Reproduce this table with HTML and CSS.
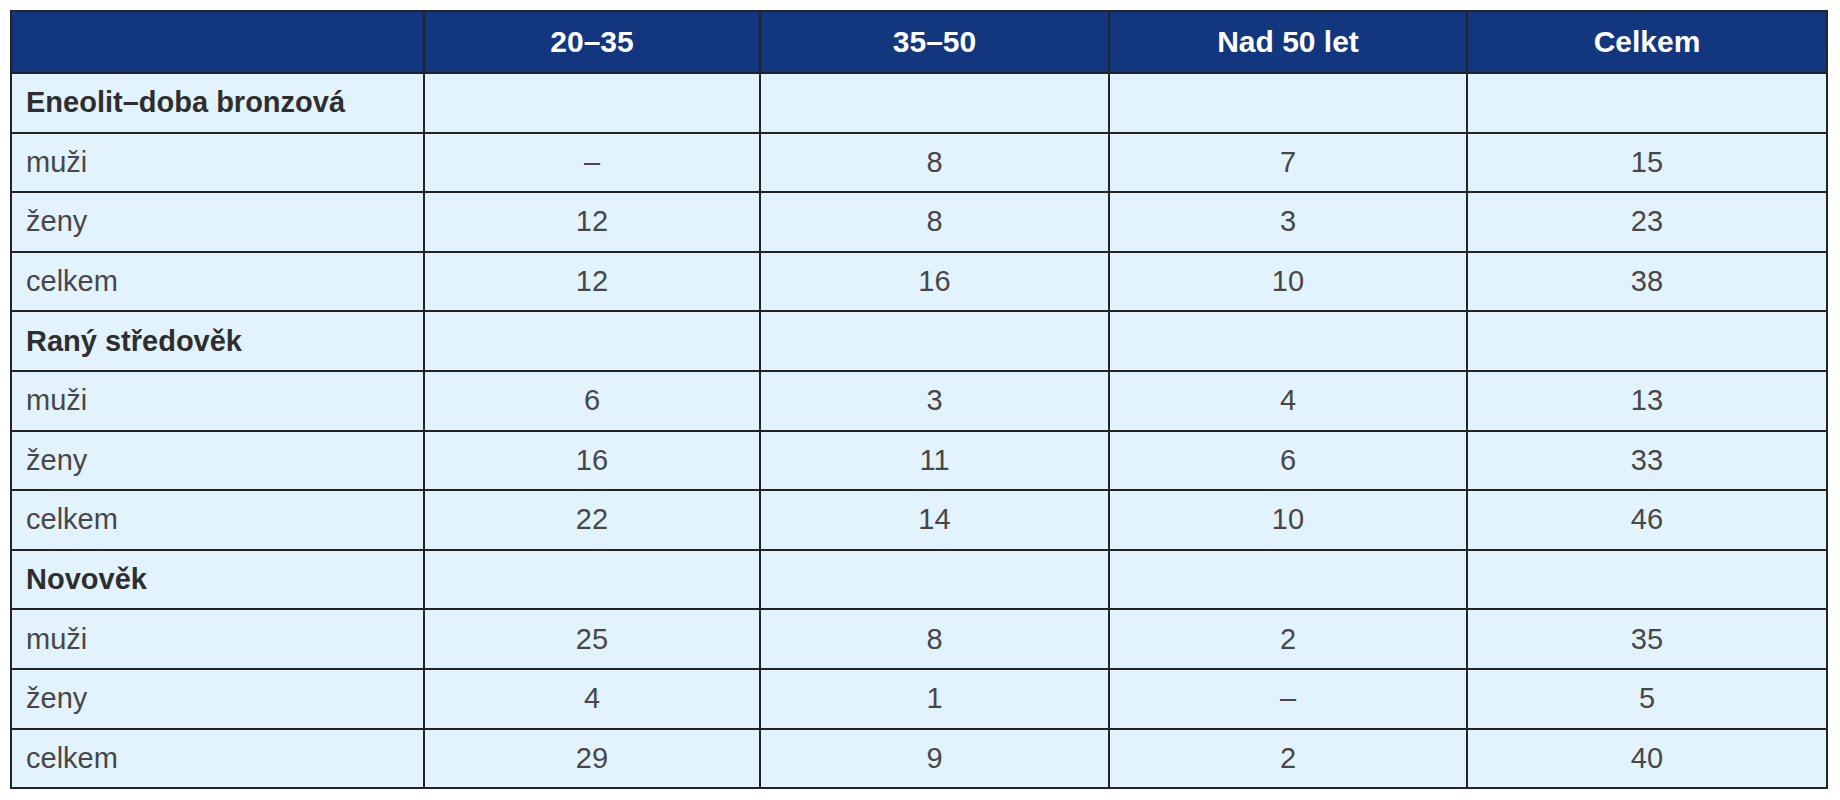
FILE: index.html
```html
<!DOCTYPE html>
<html lang="cs">
<head>
<meta charset="utf-8">
<title>Tabulka</title>
<link rel="stylesheet" href="styles.css">
</head>
<body>
<table class="data">
  <colgroup>
    <col class="c1"><col class="c2"><col class="c3"><col class="c4"><col class="c5">
  </colgroup>
  <thead>
    <tr><th></th><th>20–35</th><th>35–50</th><th>Nad 50 let</th><th>Celkem</th></tr>
  </thead>
  <tbody>
    <tr class="group"><td>Eneolit–doba bronzová</td><td></td><td></td><td></td><td></td></tr>
    <tr><td>muži</td><td>–</td><td>8</td><td>7</td><td>15</td></tr>
    <tr><td>ženy</td><td>12</td><td>8</td><td>3</td><td>23</td></tr>
    <tr><td>celkem</td><td>12</td><td>16</td><td>10</td><td>38</td></tr>
    <tr class="group"><td>Raný středověk</td><td></td><td></td><td></td><td></td></tr>
    <tr><td>muži</td><td>6</td><td>3</td><td>4</td><td>13</td></tr>
    <tr><td>ženy</td><td>16</td><td>11</td><td>6</td><td>33</td></tr>
    <tr><td>celkem</td><td>22</td><td>14</td><td>10</td><td>46</td></tr>
    <tr class="group"><td>Novověk</td><td></td><td></td><td></td><td></td></tr>
    <tr><td>muži</td><td>25</td><td>8</td><td>2</td><td>35</td></tr>
    <tr><td>ženy</td><td>4</td><td>1</td><td>–</td><td>5</td></tr>
    <tr><td>celkem</td><td>29</td><td>9</td><td>2</td><td>40</td></tr>
  </tbody>
</table>
</body>
</html>
```
FILE: styles.css
```css
html, body {
  margin: 0;
  padding: 0;
  background: #ffffff;
}
body {
  padding: 10px 0 0 10px;
  font-family: "Liberation Sans", Arial, sans-serif;
}
.data {
  border-collapse: collapse;
  table-layout: fixed;
  width: 1816px;
  background: #e3f3fd;
  color: #474747;
  font-size: 29px;
}
.c1 { width: 413px; }
.c2 { width: 336px; }
.c3 { width: 349px; }
.c4 { width: 358px; }
.c5 { width: 360px; }
.data th, .data td {
  border: 2px solid #222426;
  padding: 0 14px;
  text-align: center;
  white-space: nowrap;
}
.data th {
  background: #13377f;
  color: #ffffff;
  font-weight: bold;
  font-size: 30px;
  height: 60px;
}
.data td {
  height: 57.6px;
}
.data td:first-child {
  text-align: left;
}
.group td:first-child {
  font-weight: bold;
  color: #2e2e2e;
}
```
